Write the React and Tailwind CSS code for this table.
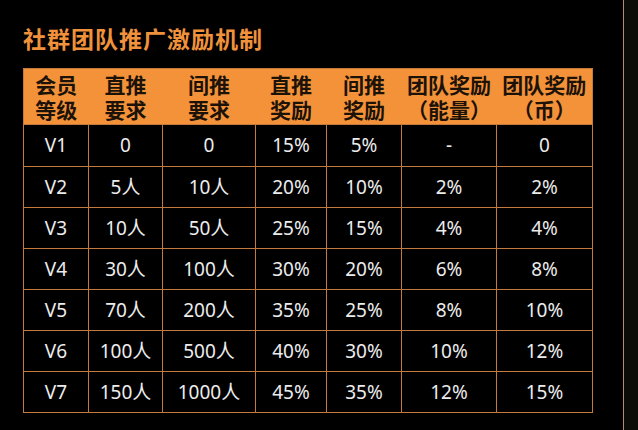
import React from "react";

const rows = [
  ["V1", "0", "0", "15%", "5%", "-", "0"],
  ["V2", "5人", "10人", "20%", "10%", "2%", "2%"],
  ["V3", "10人", "50人", "25%", "15%", "4%", "4%"],
  ["V4", "30人", "100人", "30%", "20%", "6%", "8%"],
  ["V5", "70人", "200人", "35%", "25%", "8%", "10%"],
  ["V6", "100人", "500人", "40%", "30%", "10%", "12%"],
  ["V7", "150人", "1000人", "45%", "35%", "12%", "15%"],
];

const headers = [
  ["会员", "等级"],
  ["直推", "要求"],
  ["间推", "要求"],
  ["直推", "奖励"],
  ["间推", "奖励"],
  ["团队奖励", "（能量）"],
  ["团队奖励", "（币）"],
];

const widths = ["w-[65px]", "w-[74px]", "w-[93px]", "w-[71px]", "w-[75px]", "w-[95px]", "w-[96px]"];

export default function App() {
  return (
    <div className="flex h-[430px] w-[638px] overflow-hidden bg-black">
      <div className="w-[623px] shrink-0 pl-[23px] pt-[25px]">
        <div
          className="text-[23px] font-bold leading-[26px] tracking-[1px] text-[#f0923c]"
          style={{ fontFamily: '"Noto Sans CJK SC", sans-serif' }}
        >
          社群团队推广激励机制
        </div>
        <table className="mt-[17px] border-collapse table-fixed w-[569px]">
          <colgroup>
            {widths.map((w, i) => (
              <col key={i} className={w} />
            ))}
          </colgroup>
          <thead>
            <tr className="h-[56px] bg-[#f4923a]">
              {headers.map((h, i) => (
                <th
                  key={i}
                  className="p-0 text-center align-middle text-[21px] font-bold leading-[25px] text-[#1c1208] border-y border-[#c47a3c] first:border-l last:border-r whitespace-nowrap"
                  style={{ fontFamily: '"Noto Sans CJK SC", sans-serif' }}
                >
                  <div className="h-[25px]">{h[0]}</div>
                  <div className="h-[25px]">{h[1]}</div>
                </th>
              ))}
            </tr>
          </thead>
          <tbody>
            {rows.map((r, ri) => (
              <tr key={ri} className={ri === 0 ? "h-[42px]" : "h-[41px]"}>
                {r.map((c, ci) => (
                  <td
                    key={ci}
                    className="border border-[#c47a3c] p-0 text-center align-middle text-[19px] font-normal leading-none text-[#ececec]"
                    style={{ fontFamily: '"Noto Sans", "Noto Sans CJK SC", sans-serif' }}
                  >
                    {c}
                  </td>
                ))}
              </tr>
            ))}
          </tbody>
        </table>
      </div>
      <div className="w-[1px] shrink-0 bg-[#b88a74]" />
      <div className="flex-1 bg-[#0d0b08]" />
    </div>
  );
}
